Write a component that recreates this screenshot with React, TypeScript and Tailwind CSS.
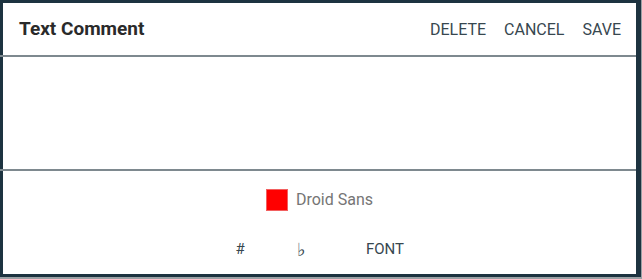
import React from 'react';

const font = { fontFamily: 'Roboto, "Noto Sans", "DejaVu Sans", sans-serif' };

export default function App() {
  return (
    <div className="w-[642px] h-[279px] bg-[#9aa1a5] overflow-hidden" style={font}>
      <div className="w-[641px] h-[277px] bg-[#1d3340] pt-[3px] pl-[3px] pr-[5px] pb-[3px]">
        <div className="w-[633px] h-[271px] bg-white flex flex-col">
          {/* Header */}
          <div className="h-[52px] flex items-center justify-between pl-4 pr-[15px] pt-[1px]">
            <h1 className="text-[19px] font-bold text-[#2a2a2a]">Text Comment</h1>
            <div className="flex items-center gap-[18px] text-[16px] text-[#37474f]">
              <button>DELETE</button>
              <button>CANCEL</button>
              <button>SAVE</button>
            </div>
          </div>
          <div className="h-[2px] bg-[#7e898f] -ml-[3px]" />

          {/* Text area */}
          <div className="h-[112px]" />
          <div className="h-[2px] bg-[#7e898f] -ml-[3px]" />

          {/* Bottom */}
          <div className="flex-1 flex flex-col">
            <div className="flex items-center justify-center gap-2 mt-[18px] h-[22px]">
              <div className="w-[22px] h-[22px] bg-[#ff0000] border border-[#f26060]" />
              <span className="text-[16px] text-[#757575]">Droid Sans</span>
            </div>
            <div className="flex items-center mt-[27px] pl-[217px] text-[15px] text-[#37474f] h-[22px]">
              <button className="w-[40px] text-center">#</button>
              <button className="w-[40px] ml-[21px] text-center text-[18px] font-light" style={{ fontFamily: '"DejaVu Sans", sans-serif' }}>♭</button>
              <button className="ml-[45px]">FONT</button>
            </div>
          </div>
        </div>
      </div>
    </div>
  );
}
